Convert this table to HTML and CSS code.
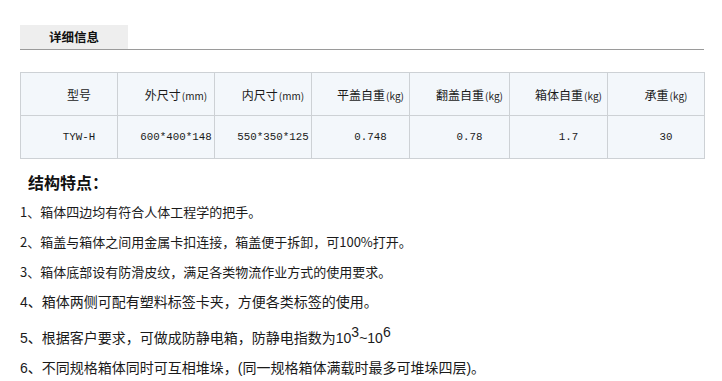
FILE: index.html
```html
<!DOCTYPE html>
<html lang="zh-CN">
<head>
<meta charset="utf-8">
<title>详细信息</title>
<link rel="stylesheet" href="styles.css">
</head>
<body>
<div class="page">
  <div class="tabbar">
    <div class="tab">详细信息</div>
  </div>
  <table class="spec">
    <colgroup>
      <col class="c97"><col class="c97"><col class="c97"><col class="c98"><col class="c100"><col class="c98"><col class="c97">
    </colgroup>
    <tr>
      <td>型号</td>
      <td>外尺寸<span class="unit">(mm)</span></td>
      <td>内尺寸<span class="unit">(mm)</span></td>
      <td>平盖自重<span class="unit">(kg)</span></td>
      <td>翻盖自重<span class="unit">(kg)</span></td>
      <td>箱体自重<span class="unit">(kg)</span></td>
      <td>承重<span class="unit">(kg)</span></td>
    </tr>
    <tr>
      <td class="mono">TYW-H</td>
      <td class="mono">600*400*148</td>
      <td class="mono">550*350*125</td>
      <td class="mono">0.748</td>
      <td class="mono">0.78</td>
      <td class="mono">1.7</td>
      <td class="mono">30</td>
    </tr>
  </table>
  <h2 class="title">结构特点：</h2>
  <p class="item a">1、箱体四边均有符合人体工程学的把手。</p>
  <p class="item a">2、箱盖与箱体之间用金属卡扣连接，箱盖便于拆卸，可100%打开。</p>
  <p class="item a">3、箱体底部设有防滑皮纹，满足各类物流作业方式的使用要求。</p>
  <p class="item b">4、箱体两侧可配有塑料标签卡夹，方便各类标签的使用。</p>
  <p class="item b tall">5、根据客户要求，可做成防静电箱，防静电指数为10<sup>3</sup>~10<sup>6</sup></p>
  <p class="item b">6、不同规格箱体同时可互相堆垛，(同一规格箱体满载时最多可堆垛四层)。</p>
</div>
</body>
</html>
```

FILE: styles.css
```css
html, body {
  margin: 0;
  padding: 0;
  background: #ffffff;
}
body {
  font-family: "Noto Sans CJK SC", "Liberation Sans", sans-serif;
  color: #1a1a1a;
}
.page {
  width: 684px;
  padding: 25px 0 0 20px;
}
.tabbar {
  height: 24px;
  border-bottom: 1px solid #9a9a9a;
  display: flex;
}
.tab {
  width: 108px;
  height: 24px;
  background: #eeeeee;
  font-size: 12.5px;
  font-weight: bold;
  line-height: 24px;
  text-align: center;
  color: #111;
}
.spec {
  margin-top: 22px;
  width: 685px;
  border-collapse: collapse;
  table-layout: fixed;
}
.c97 { width: 97px; }
.c98 { width: 98px; }
.c100 { width: 100px; }
.spec td {
  height: 42px;
  border: 1px solid #cdd1d5;
  background: #f3f7fb;
  font-size: 12px;
  text-align: center;
  padding: 0 0 0 20px;
  white-space: nowrap;
  color: #1a1a1a;
}
.spec td.mono {
  font-family: "Liberation Mono", "Noto Sans CJK SC", monospace;
  font-size: 10.8px;
}
.unit {
  font-size: 10px;
  margin-left: 1px;
}
.title {
  margin: 8px 0 0 8px;
  font-size: 16px;
  font-weight: bold;
  line-height: 30px;
  height: 30px;
  color: #111;
}
.item {
  margin: 0;
  height: 30px;
  line-height: 30px;
  white-space: nowrap;
}
.item.a {
  font-size: 13px;
}
.item.b {
  font-family: "Liberation Sans", "Noto Sans CJK SC", sans-serif;
  font-size: 14px;
}
.item.tall {
  height: 36px;
  padding-top: 6px;
  box-sizing: border-box;
  line-height: 30px;
}
.item sup {
  font-size: 14px;
  line-height: 0;
  vertical-align: 6px;
}
```
